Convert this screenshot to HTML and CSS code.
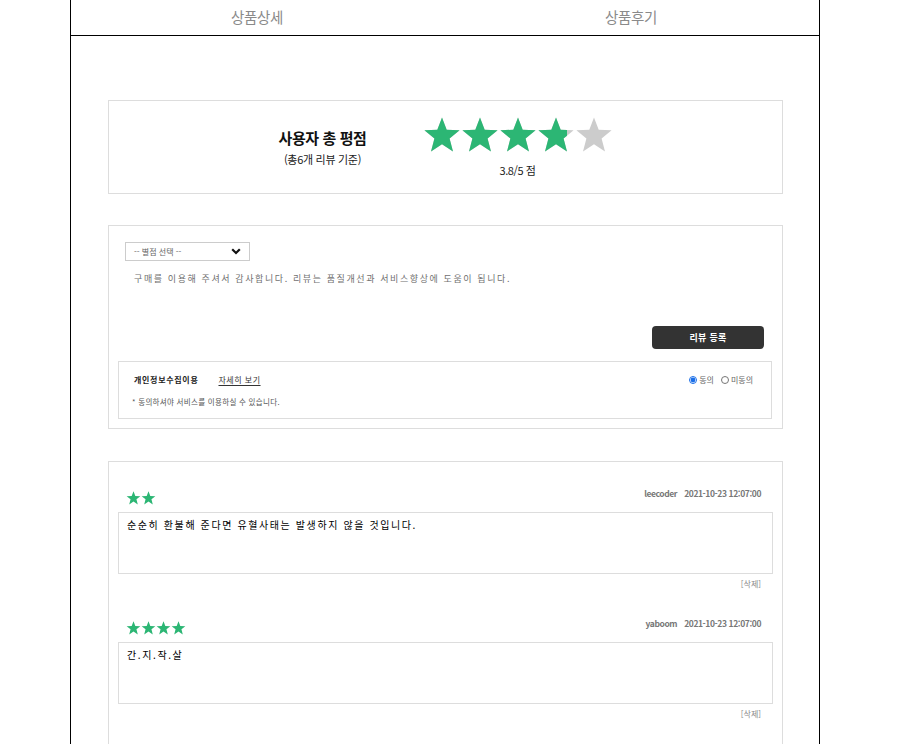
FILE: index.html
```html
<!DOCTYPE html>
<html lang="ko">
<head>
<meta charset="utf-8">
<title>상품후기</title>
<link rel="stylesheet" href="styles.css">
</head>
<body>
<div class="page">
  <div class="tabs">
    <div class="tab">상품상세</div>
    <div class="tab">상품후기</div>
  </div>
  <div class="content">
    <section class="summary">
      <div class="summary-title">
        <div class="title">사용자 총 평점</div>
        <div class="sub">(총6개 리뷰 기준)</div>
      </div>
      <div class="summary-score">
        <div class="big-stars">
          <div class="star-row grey">
            <svg viewBox="0 0 38 36" class="bstar"><polygon points="19,0.5 23.7,12.7 36.6,13.3 26.6,21.5 30.0,34.4 19,27.2 8.0,34.4 11.4,21.5 1.4,13.3 14.3,12.7"/></svg>
            <svg viewBox="0 0 38 36" class="bstar"><polygon points="19,0.5 23.7,12.7 36.6,13.3 26.6,21.5 30.0,34.4 19,27.2 8.0,34.4 11.4,21.5 1.4,13.3 14.3,12.7"/></svg>
            <svg viewBox="0 0 38 36" class="bstar"><polygon points="19,0.5 23.7,12.7 36.6,13.3 26.6,21.5 30.0,34.4 19,27.2 8.0,34.4 11.4,21.5 1.4,13.3 14.3,12.7"/></svg>
            <svg viewBox="0 0 38 36" class="bstar"><polygon points="19,0.5 23.7,12.7 36.6,13.3 26.6,21.5 30.0,34.4 19,27.2 8.0,34.4 11.4,21.5 1.4,13.3 14.3,12.7"/></svg>
            <svg viewBox="0 0 38 36" class="bstar"><polygon points="19,0.5 23.7,12.7 36.6,13.3 26.6,21.5 30.0,34.4 19,27.2 8.0,34.4 11.4,21.5 1.4,13.3 14.3,12.7"/></svg>
          </div>
          <div class="star-fill" style="width:76%">
            <div class="star-row green">
              <svg viewBox="0 0 38 36" class="bstar"><polygon points="19,0.5 23.7,12.7 36.6,13.3 26.6,21.5 30.0,34.4 19,27.2 8.0,34.4 11.4,21.5 1.4,13.3 14.3,12.7"/></svg>
              <svg viewBox="0 0 38 36" class="bstar"><polygon points="19,0.5 23.7,12.7 36.6,13.3 26.6,21.5 30.0,34.4 19,27.2 8.0,34.4 11.4,21.5 1.4,13.3 14.3,12.7"/></svg>
              <svg viewBox="0 0 38 36" class="bstar"><polygon points="19,0.5 23.7,12.7 36.6,13.3 26.6,21.5 30.0,34.4 19,27.2 8.0,34.4 11.4,21.5 1.4,13.3 14.3,12.7"/></svg>
              <svg viewBox="0 0 38 36" class="bstar"><polygon points="19,0.5 23.7,12.7 36.6,13.3 26.6,21.5 30.0,34.4 19,27.2 8.0,34.4 11.4,21.5 1.4,13.3 14.3,12.7"/></svg>
              <svg viewBox="0 0 38 36" class="bstar"><polygon points="19,0.5 23.7,12.7 36.6,13.3 26.6,21.5 30.0,34.4 19,27.2 8.0,34.4 11.4,21.5 1.4,13.3 14.3,12.7"/></svg>
            </div>
          </div>
        </div>
        <div class="score">3.8/5 점</div>
      </div>
    </section>

    <section class="form-box">
      <div class="select">
        <span>-- 별점 선택 --</span>
        <svg class="chev" viewBox="0 0 10 7" width="10" height="7"><polyline points="1.2,1.2 5,5 8.8,1.2" fill="none" stroke="#111" stroke-width="2.2"/></svg>
      </div>
      <textarea class="write" placeholder="구매를 이용해 주셔서 감사합니다. 리뷰는 품질개선과 서비스향상에 도움이 됩니다."></textarea>
      <div class="btn-row"><button class="submit">리뷰 등록</button></div>
      <div class="privacy">
        <div class="privacy-top">
          <div class="privacy-left">
            <span class="privacy-label">개인정보수집이용</span>
            <span class="privacy-more">자세히 보기</span>
          </div>
          <div class="agree">
            <label class="opt"><input type="radio" name="agree" checked>동의</label>
            <label class="opt"><input type="radio" name="agree">미동의</label>
          </div>
        </div>
        <div class="privacy-note">* 동의하셔야 서비스를 이용하실 수 있습니다.</div>
      </div>
    </section>

    <section class="review-list">
      <article class="review">
        <div class="review-head">
          <div class="sstars">
            <svg viewBox="0 0 38 36" class="sstar"><polygon points="19,0.5 23.7,12.7 36.6,13.3 26.6,21.5 30.0,34.4 19,27.2 8.0,34.4 11.4,21.5 1.4,13.3 14.3,12.7"/></svg>
            <svg viewBox="0 0 38 36" class="sstar"><polygon points="19,0.5 23.7,12.7 36.6,13.3 26.6,21.5 30.0,34.4 19,27.2 8.0,34.4 11.4,21.5 1.4,13.3 14.3,12.7"/></svg>
          </div>
          <div class="meta"><span class="user">leecoder</span><span class="date">2021-10-23 12:07:00</span></div>
        </div>
        <div class="review-body">순순히 환불해 준다면 유혈사태는 발생하지 않을 것입니다.</div>
        <div class="review-foot"><span class="del">[삭제]</span></div>
      </article>
      <article class="review">
        <div class="review-head">
          <div class="sstars">
            <svg viewBox="0 0 38 36" class="sstar"><polygon points="19,0.5 23.7,12.7 36.6,13.3 26.6,21.5 30.0,34.4 19,27.2 8.0,34.4 11.4,21.5 1.4,13.3 14.3,12.7"/></svg>
            <svg viewBox="0 0 38 36" class="sstar"><polygon points="19,0.5 23.7,12.7 36.6,13.3 26.6,21.5 30.0,34.4 19,27.2 8.0,34.4 11.4,21.5 1.4,13.3 14.3,12.7"/></svg>
            <svg viewBox="0 0 38 36" class="sstar"><polygon points="19,0.5 23.7,12.7 36.6,13.3 26.6,21.5 30.0,34.4 19,27.2 8.0,34.4 11.4,21.5 1.4,13.3 14.3,12.7"/></svg>
            <svg viewBox="0 0 38 36" class="sstar"><polygon points="19,0.5 23.7,12.7 36.6,13.3 26.6,21.5 30.0,34.4 19,27.2 8.0,34.4 11.4,21.5 1.4,13.3 14.3,12.7"/></svg>
          </div>
          <div class="meta"><span class="user">yaboom</span><span class="date">2021-10-23 12:07:00</span></div>
        </div>
        <div class="review-body">간.지.작.살</div>
        <div class="review-foot"><span class="del">[삭제]</span></div>
      </article>
    </section>
  </div>
</div>
</body>
</html>
```

FILE: styles.css
```css
* { box-sizing: border-box; }

html, body {
  margin: 0;
  padding: 0;
  background: #fff;
}

body {
  font-family: "Noto Sans CJK KR", "Noto Sans", sans-serif;
  color: #222;
}

.page {
  width: 750px;
  margin-left: 70px;
  border-left: 1px solid #000;
  border-right: 1px solid #000;
  min-height: 100vh;
}

.tabs {
  display: grid;
  grid-template-columns: 1fr 1fr;
  height: 36px;
  border-bottom: 1px solid #000;
}

.tab {
  display: flex;
  align-items: center;
  justify-content: center;
  padding-bottom: 3px;
  font-size: 14.5px;
  color: #8a8a8a;
  letter-spacing: -0.3px;
  padding-right: 2px;
}

.content {
  padding: 64px 36px 40px 37px;
}

/* summary */
.summary {
  border: 1px solid #ddd;
  height: 94px;
  display: flex;
  align-items: center;
  justify-content: center;
  gap: 56px;
}

.summary-title {
  width: 88px;
  text-align: center;
  white-space: nowrap;
  display: flex;
  flex-direction: column;
  align-items: center;
}

.title {
  font-size: 15px;
  font-weight: 700;
  line-height: 20px;
  color: #111;
  letter-spacing: -0.4px;
}

.sub {
  margin-top: 4px;
  font-size: 11px;
  line-height: 14px;
  color: #222;
  letter-spacing: -0.3px;
}

.summary-score {
  width: 190px;
  display: flex;
  flex-direction: column;
  align-items: center;
}

.big-stars {
  position: relative;
  width: 190px;
  height: 36px;
}

.star-row {
  display: flex;
  width: 190px;
}

.star-row.grey { fill: #cccccc; }
.star-row.green { fill: #2cb674; }

.bstar {
  display: block;
  width: 38px;
  height: 36px;
  flex: none;
}

.star-fill {
  position: absolute;
  top: 0;
  left: 0;
  height: 36px;
  overflow: hidden;
}

.score {
  margin-top: 10px;
  font-size: 11px;
  line-height: 14px;
  color: #222;
  letter-spacing: -0.4px;
}

/* form */
.form-box {
  margin-top: 31px;
  border: 1px solid #ddd;
  padding: 16px 10px 9px 9px;
}

.select {
  margin-left: 7px;
  width: 125px;
  height: 19px;
  border: 1px solid #ccc;
  display: flex;
  align-items: center;
  justify-content: space-between;
  padding: 0 8px 0 8px;
  font-size: 8px;
  color: #666;
  letter-spacing: 0;
}

.chev { display: block; }

.write {
  display: block;
  margin: 7px 0 0 7px;
  width: calc(100% - 14px);
  height: 52px;
  border: none;
  outline: none;
  resize: none;
  padding: 4px 9px;
  font-family: "Noto Sans CJK KR", "Noto Sans", sans-serif;
  font-size: 9px;
  line-height: 13px;
  letter-spacing: 1.6px;
  color: #333;
}

.write::placeholder {
  color: #6f6f6f;
}

.btn-row {
  display: flex;
  justify-content: flex-end;
  margin-top: 6px;
  padding-right: 8px;
}

.submit {
  width: 112px;
  height: 23px;
  border: none;
  border-radius: 4px;
  background: #333;
  color: #fff;
  font-family: "Noto Sans CJK KR", "Noto Sans", sans-serif;
  font-size: 9px;
  font-weight: 700;
  letter-spacing: 0.3px;
  padding: 0;
}

.privacy {
  margin-top: 12px;
  border: 1px solid #ddd;
  height: 58px;
  padding: 11px 18px 0 15px;
}

.privacy-top {
  display: flex;
  justify-content: space-between;
  align-items: center;
  height: 14px;
}

.privacy-left {
  display: flex;
  align-items: center;
  gap: 20px;
}

.privacy-label {
  font-size: 8px;
  font-weight: 700;
  color: #222;
  line-height: 14px;
  letter-spacing: 0.7px;
}

.privacy-more {
  font-size: 8px;
  color: #333;
  line-height: 14px;
  letter-spacing: 0.5px;
  text-decoration: underline;
  text-underline-offset: 2px;
}

.agree {
  display: flex;
  align-items: center;
  gap: 7px;
}

.opt {
  display: flex;
  align-items: center;
  font-size: 8px;
  color: #666;
  line-height: 12px;
}

.opt input {
  width: 8px;
  height: 8px;
  margin: 0 2px 0 0;
  accent-color: #1a6ee8;
}

.privacy-note {
  margin-top: 9px;
  margin-left: -2px;
  font-size: 7.5px;
  line-height: 11px;
  letter-spacing: 0.3px;
  color: #555;
}

/* reviews */
.review-list {
  margin-top: 32px;
  border: 1px solid #ddd;
  padding: 23px 9px 60px 9px;
}

.review {
  margin-bottom: 26px;
}

.review-head {
  display: flex;
  justify-content: space-between;
  align-items: flex-end;
  height: 20px;
  margin-bottom: 7px;
}

.sstars {
  display: flex;
  margin-left: 8px;
  fill: #2cb674;
}

.sstar {
  display: block;
  width: 15px;
  height: 14px;
}

.meta {
  padding: 0 12px 6px 0;
  font-size: 8.5px;
  line-height: 12px;
  font-weight: 700;
  color: #777;
  letter-spacing: -0.4px;
  display: flex;
  gap: 7px;
}

.review-body {
  border: 1px solid #ddd;
  height: 62px;
  padding: 5px 8px;
  font-size: 10px;
  line-height: 14px;
  letter-spacing: 1.6px;
  color: #000;
}

.review-foot {
  display: flex;
  justify-content: flex-end;
  margin-top: 5px;
  padding-right: 12px;
}

.del {
  font-size: 8px;
  line-height: 10px;
  color: #888;
}
```
